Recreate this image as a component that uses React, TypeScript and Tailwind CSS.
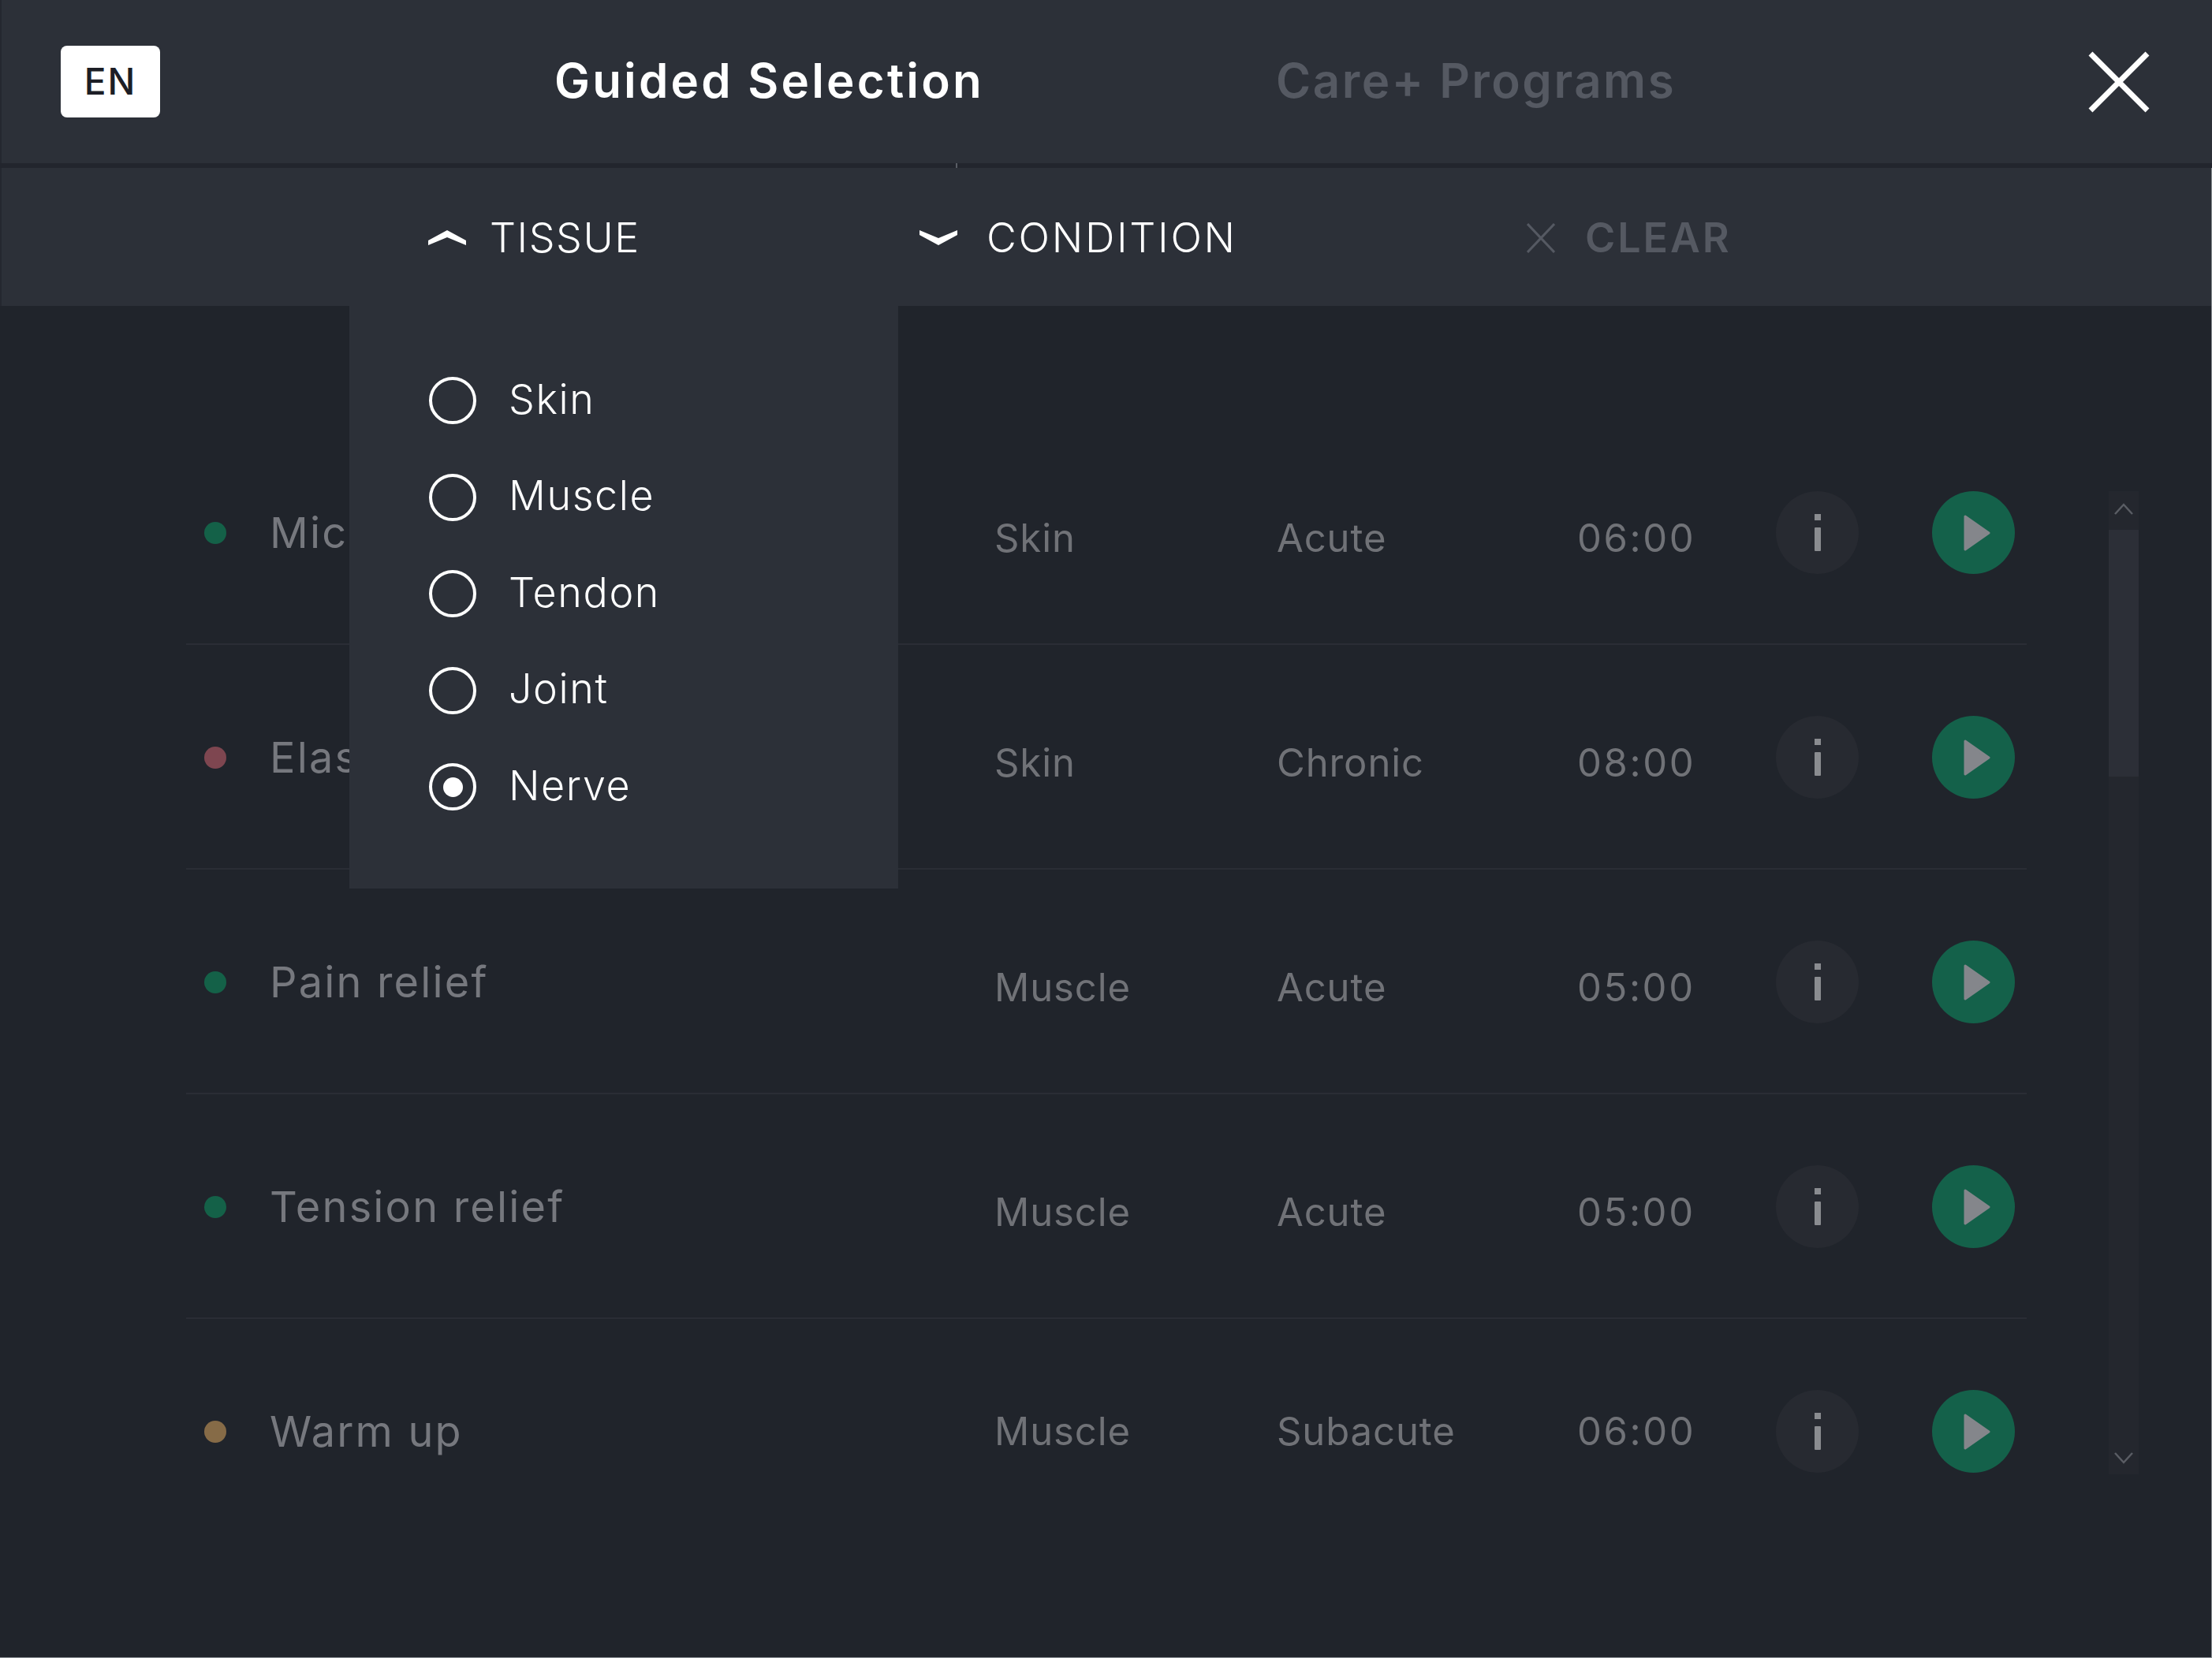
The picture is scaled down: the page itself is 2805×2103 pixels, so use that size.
import React from 'react';

const FONT = "font-['Inter','Liberation_Sans',sans-serif]";

// the first two names run under the open dropdown, only their start is visible
const rows = [
  { name: 'Micr', dot: 'bg-[#146148]', tissue: 'Skin', condition: 'Acute', time: '06:00' },
  { name: 'Elas', dot: 'bg-[#7e4650]', tissue: 'Skin', condition: 'Chronic', time: '08:00' },
  { name: 'Pain relief', dot: 'bg-[#146148]', tissue: 'Muscle', condition: 'Acute', time: '05:00' },
  { name: 'Tension relief', dot: 'bg-[#146148]', tissue: 'Muscle', condition: 'Acute', time: '05:00' },
  { name: 'Warm up', dot: 'bg-[#866b47]', tissue: 'Muscle', condition: 'Subacute', time: '06:00' },
];

const tissues = ['Skin', 'Muscle', 'Tendon', 'Joint', 'Nerve'];

const Chevron: React.FC<{ up?: boolean }> = ({ up }) => (
  <svg width="48" height="20" viewBox="0 0 48 20" className="shrink-0">
    <path
      d={up ? 'M0 19V13L24 0L48 13V19L24 9Z' : 'M0 0V6L24 19L48 6V0L24 10Z'}
      fill="#ffffff"
    />
  </svg>
);

const App: React.FC = () => {
  return (
    <div className={`relative w-[2805px] h-[2103px] overflow-hidden bg-[#20242b] ${FONT}`}>
      {/* top tabs */}
      <div className="flex items-center h-[207px] bg-[#2c3038] border-l-2 border-[#24272f] pl-[75px]">
        <div className="flex items-center justify-center w-[126px] h-[91px] bg-white rounded-[8px] text-[46px] font-medium tracking-[2px] text-[#1c1e26]">
          EN
        </div>
        <div className="ml-[500px] w-[915px] pb-[4px] text-[60px] font-semibold tracking-[3.2px] leading-none text-white whitespace-nowrap">
          Guided Selection
        </div>
        <div className="w-[506px] pb-[4px] text-[60px] font-semibold tracking-[2.5px] leading-none text-[#555962] whitespace-nowrap">
          Care+ Programs
        </div>
        <svg width="78" height="78" viewBox="0 0 78 78" className="ml-[524px]">
          <path d="M3 3L75 75M75 3L3 75" stroke="#ffffff" strokeWidth="7" fill="none" />
        </svg>
      </div>
      <div className="relative h-[6px] bg-[#22252d]">
        <div className="absolute left-[1212px] top-0 w-[2px] h-[6px] bg-[#5a5e66]" />
      </div>

      <div className="h-[1890px] border-r border-b border-[#8a9094]">
        {/* filter bar */}
        <div className="flex items-center h-[175px] bg-[#2c3038] border-l-2 border-[#24272f] pl-[541px] pt-[3px] text-[52px] font-light leading-none">
          <Chevron up />
          <span className="ml-[30px] w-[545px] tracking-[1.5px] text-white">TISSUE</span>
          <Chevron />
          <span className="ml-[37px] w-[685px] tracking-[2.7px] text-white">CONDITION</span>
          <svg width="36" height="38" viewBox="0 0 36 38" className="shrink-0">
            <path d="M1 1L35 37M35 1L1 37" stroke="#555962" strokeWidth="3" fill="none" />
          </svg>
          <span className="ml-[38px] font-semibold tracking-[2.9px] text-[#555962]">CLEAR</span>
        </div>

        {/* program list */}
        <div className="flex pl-[236px] pt-[145px]">
          <div className="w-[2334px]">
            {rows.map((row, i) => {
              const last = i === rows.length - 1;
              return (
                <div
                  key={row.name}
                  className={`flex items-center h-[285px] pl-[23px] ${last ? '' : 'pt-[2px] border-b-2 border-[#2a2d35]'}`}
                >
                  <div className={`w-[28px] h-[28px] rounded-full shrink-0 ${row.dot}`} />
                  <div className="ml-[55px] w-[919px] text-[54px] font-normal tracking-[2.2px] text-[#76787e] whitespace-nowrap">
                    {row.name}
                  </div>
                  <div className={`flex items-center text-[49px] font-normal tracking-[0.9px] text-[#707277] ${last ? '' : 'pt-[14px]'}`}>
                    <div className="w-[358px]">{row.tissue}</div>
                    <div className="w-[381px]">{row.condition}</div>
                    <div className="w-[252px] tracking-[2.6px]">{row.time}</div>
                  </div>
                  <div className="flex flex-col items-center justify-center w-[105px] h-[105px] rounded-full bg-[#272a31] shrink-0">
                    <div className="w-[8px] h-[8px] bg-[#8a8c90]" />
                    <div className="mt-[9px] w-[8px] h-[30px] rounded-[1px] bg-[#8a8c90]" />
                  </div>
                  <div className="flex items-center justify-center ml-[93px] w-[105px] h-[105px] rounded-full bg-[#14614a] shrink-0">
                    <svg width="34" height="46" viewBox="0 0 34 46" className="ml-[8px]">
                      <path d="M2 2L32 23L2 44Z" fill="#84868b" stroke="#84868b" strokeWidth="3" strokeLinejoin="round" />
                    </svg>
                  </div>
                </div>
              );
            })}
          </div>

          {/* scrollbar */}
          <div className="flex flex-col items-center ml-[104px] mt-[90px] w-[38px] h-[1247px] bg-[#24272e]">
            <div className="flex items-start justify-center h-[49px] pt-[15px]">
              <svg width="24" height="15" viewBox="0 0 24 15">
                <path d="M1 14L12 2L23 14" stroke="#5a5d64" strokeWidth="2.5" fill="none" />
              </svg>
            </div>
            <div className="w-full h-[313px] bg-[#2c2f37]" />
            <div className="flex-1" />
            <div className="pb-[13px] leading-none">
              <svg width="24" height="15" viewBox="0 0 24 15">
                <path d="M1 1L12 13L23 1" stroke="#5a5d64" strokeWidth="2.5" fill="none" />
              </svg>
            </div>
          </div>
        </div>
      </div>

      {/* tissue dropdown */}
      <div className="absolute left-[443px] top-[388px] flex flex-col w-[696px] h-[739px] bg-[#2c3038] pl-[101px] pt-[59px]">
        {tissues.map((t) => (
          <div key={t} className="flex items-center h-[122.5px]">
            <div className="flex items-center justify-center w-[60px] h-[60px] rounded-full border-[4px] border-white shrink-0">
              {t === 'Nerve' && <div className="w-[25px] h-[25px] rounded-full bg-white" />}
            </div>
            <span className="ml-[41px] pb-[3px] text-[52px] font-light tracking-[1.6px] text-white">{t}</span>
          </div>
        ))}
      </div>
    </div>
  );
};

export default App;
